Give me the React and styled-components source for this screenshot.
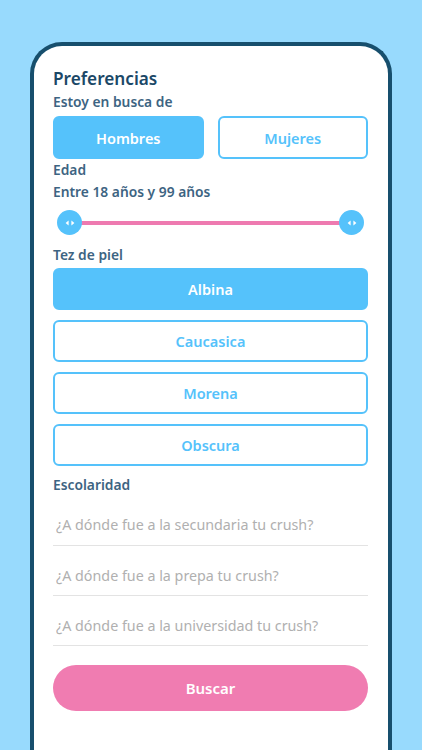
import React from "react";
import styled, { createGlobalStyle } from "styled-components";

const Global = createGlobalStyle`
  html, body { margin: 0; padding: 0; }
  body {
    background: #98dafd;
    font-family: "Noto Sans", "Open Sans", sans-serif;
    overflow: hidden;
  }
`;

const Screen = styled.div`
  width: 422px;
  height: 750px;
  background: #98dafd;
  padding-top: 42px;
  padding-left: 30px;
  box-sizing: border-box;
  overflow: hidden;
`;

const Phone = styled.div`
  width: 362px;
  height: 760px;
  box-sizing: border-box;
  background: #ffffff;
  border: 4px solid #174f6d;
  border-bottom: none;
  border-radius: 32px 32px 0 0;
  padding: 21px 20px 0 19px;
  display: flex;
  flex-direction: column;
`;

const Title = styled.h1`
  margin: 0;
  font-size: 17.2px;
  font-weight: 600;
  color: #1b4867;
  line-height: 24px;
`;

const Label = styled.div`
  font-size: 13.8px;
  font-weight: 600;
  color: #3d6482;
  line-height: 18px;
  margin-top: ${(p) => p.$mt || 0}px;
`;

const Row = styled.div`
  display: flex;
  gap: 14px;
  margin-top: ${(p) => p.$mt || 0}px;
`;

const Choice = styled.button`
  flex: ${(p) => (p.$wide ? "none" : "1")};
  height: ${(p) => p.$h || 43}px;
  box-sizing: border-box;
  border-radius: 6px;
  border: 2px solid #55c2fb;
  background: ${(p) => (p.$active ? "#55c2fb" : "#ffffff")};
  color: ${(p) => (p.$active ? "#ffffff" : "#55c2fb")};
  font-family: inherit;
  font-size: 14.5px;
  font-weight: 600;
  padding: 0;
  cursor: pointer;
`;

const Stack = styled.div`
  display: flex;
  flex-direction: column;
  gap: 10px;
  margin-top: ${(p) => p.$mt || 0}px;
`;

const Slider = styled.div`
  position: relative;
  height: 26px;
  margin-top: ${(p) => p.$mt || 0}px;
  display: flex;
  align-items: center;
`;

const Track = styled.div`
  height: 4px;
  background: #ee7ab0;
  margin: 0 16px;
  flex: 1;
`;

const Thumb = styled.div`
  position: absolute;
  top: 0;
  ${(p) => (p.$right ? "right: 4px;" : "left: 4px;")}
  width: 25px;
  height: 25px;
  border-radius: 50%;
  background: #55c2fb;
  display: flex;
  align-items: center;
  justify-content: center;
`;

const Arrows = () => (
  <svg width="10" height="6" viewBox="0 0 10 6">
    <path d="M3.6 0.4 L0.6 3 L3.6 5.6 Z" fill="#fff" />
    <path d="M6.4 0.4 L9.4 3 L6.4 5.6 Z" fill="#fff" />
  </svg>
);

const Field = styled.input`
  display: block;
  width: 100%;
  box-sizing: border-box;
  border: none;
  border-bottom: 1.5px solid #e3e3e3;
  outline: none;
  background: transparent;
  font-family: inherit;
  font-size: 14.3px;
  color: #333;
  height: ${(p) => p.$h || 50}px;
  padding: 10px 3px 0;
  &::placeholder { color: #b0b0b0; }
`;

const Search = styled.button`
  margin-top: 19px;
  height: 46px;
  border: none;
  border-radius: 23px;
  background: #f07cb1;
  color: #fff;
  font-family: inherit;
  font-size: 15px;
  font-weight: 600;
  cursor: pointer;
`;

export default function App() {
  return (
    <>
      <Global />
      <Screen>
        <Phone>
          <Title>Preferencias</Title>
          <Label $mt={2}>Estoy en busca de</Label>
          <Row $mt={5}>
            <Choice $active>Hombres</Choice>
            <Choice>Mujeres</Choice>
          </Row>
          <Label $mt={2}>Edad</Label>
          <Label $mt={4}>Entre 18 años y 99 años</Label>
          <Slider $mt={9}>
            <Thumb><Arrows /></Thumb>
            <Track />
            <Thumb $right><Arrows /></Thumb>
          </Slider>
          <Label $mt={10}>Tez de piel</Label>
          <Stack $mt={4}>
            <Choice $wide $active $h={42}>Albina</Choice>
            <Choice $wide $h={42}>Caucasica</Choice>
            <Choice $wide $h={42}>Morena</Choice>
            <Choice $wide $h={42}>Obscura</Choice>
          </Stack>
          <Label $mt={10}>Escolaridad</Label>
          <Field $h={52} placeholder="¿A dónde fue a la secundaria tu crush?" />
          <Field placeholder="¿A dónde fue a la prepa tu crush?" />
          <Field placeholder="¿A dónde fue a la universidad tu crush?" />
          <Search>Buscar</Search>
        </Phone>
      </Screen>
    </>
  );
}
